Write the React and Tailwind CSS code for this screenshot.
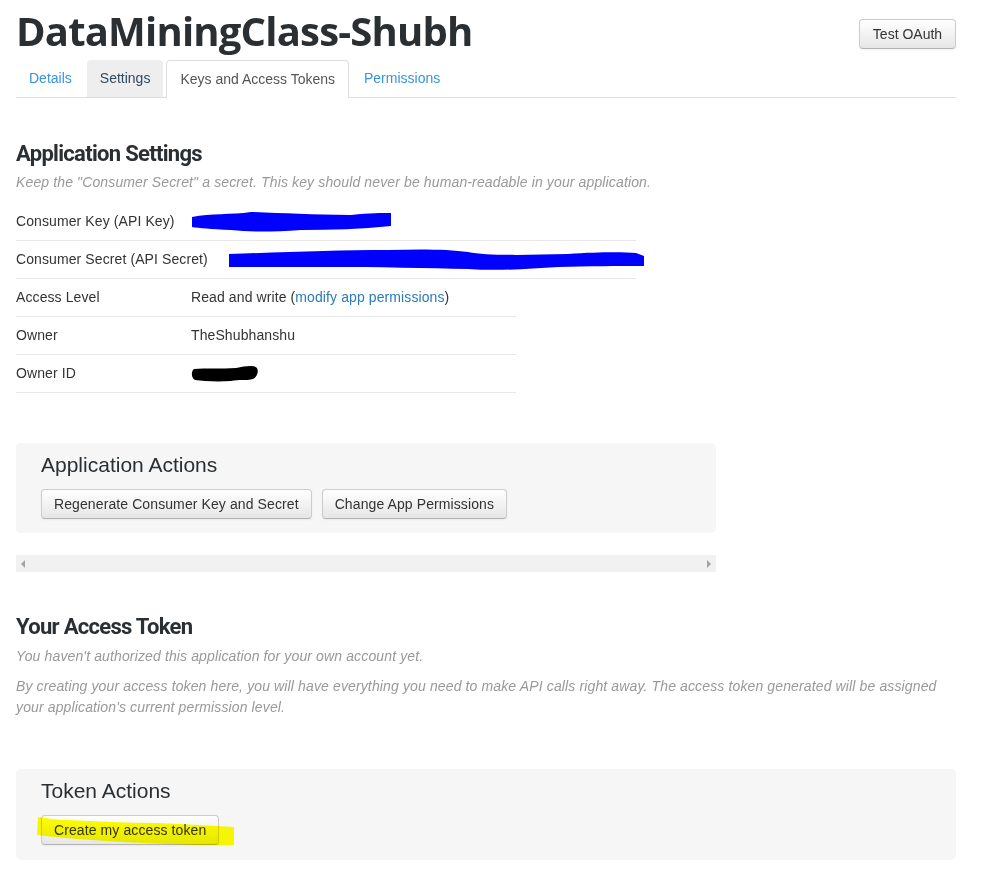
import React from "react";

function Btn({ children, className = "" }) {
  return (
    <button
      className={
        "h-[30px] whitespace-nowrap rounded-[4px] border border-[#ccc] border-b-[#b3b3b3] bg-gradient-to-b from-white to-[#e6e6e6] px-[12px] text-[14px] leading-[20px] text-[#333] shadow-[inset_0_1px_0_rgba(255,255,255,0.2),0_1px_2px_rgba(0,0,0,0.05)] " +
        className
      }
    >
      {children}
    </button>
  );
}

function Row({ label, children, wide, labelClass = "w-[175px]" }) {
  return (
    <div
      className={
        "flex h-[38px] items-center border-b border-[#e8e8e8] " +
        (wide ? "w-[620px]" : "w-[500px]")
      }
    >
      <div className={"shrink-0 " + labelClass}>{label}</div>
      <div className="flex items-center">{children}</div>
    </div>
  );
}

export default function App() {
  return (
    <div className="min-h-[869px] w-[1004px] bg-white px-[16px] font-['Liberation_Sans',Arial,sans-serif] text-[14px] tracking-[0.1px] text-[#333]">
      <div className="w-[940px]">
        {/* Header */}
        <div className="flex items-start justify-between pt-[8px]">
          <h1 className="font-['Open_Sans',sans-serif] text-[40px] font-bold leading-[46px] tracking-[-0.8px] text-[#292f33]">
            DataMiningClass-Shubh
          </h1>
          <Btn className="mt-[11px] h-[29px] w-[97px] px-0 tracking-normal">Test OAuth</Btn>
        </div>

        {/* Tabs */}
        <div className="mt-[6px] flex h-[38px] items-end border-b border-[#ddd] tracking-normal">
          <div className="mr-[2px] flex h-[37px] items-center px-[13px] text-[#3b94d9]">Details</div>
          <div className="mr-[3px] flex h-[37px] items-center rounded-t-[4px] bg-[#eee] px-[13px] text-[#2f4a62]">
            Settings
          </div>
          <div className="-mb-px mr-[2px] flex h-[38px] items-center rounded-t-[4px] border border-b-0 border-[#ddd] bg-white px-[13px] text-[#555]">
            Keys and Access Tokens
          </div>
          <div className="flex h-[37px] items-center px-[13px] text-[#3b94d9]">Permissions</div>
        </div>

        {/* Application Settings */}
        <h2 className="mt-[42px] font-['Roboto',sans-serif] text-[22px] font-bold leading-[28px] tracking-[-0.7px] text-[#292f33]">
          Application Settings
        </h2>
        <p className="mt-[4px] text-[14px] italic leading-[20px] tracking-[0.13px] text-[#999]">
          Keep the "Consumer Secret" a secret. This key should never be human-readable in your application.
        </p>

        <div className="mt-[11px]">
          <Row label="Consumer Key (API Key)" wide>
            <svg width="202" height="24" viewBox="0 0 202 24">
              <path
                d="M1 7 C20 3 40 5 60 2 C90 3 120 5 160 5 C180 3 190 3 200 3 L200 16 C170 19 140 20 110 20 C80 22 60 22 40 20 C20 19 8 18 1 17 Z"
                fill="#0000ff"
              />
            </svg>
          </Row>
          <Row label="Consumer Secret (API Secret)" wide labelClass="w-[212px]">
            <svg width="418" height="24" viewBox="0 0 418 24">
              <path
                d="M1 6 C60 4 110 2 160 2 C190 1 220 1 240 4 C260 8 300 7 340 6 C370 4 395 4 408 5 L416 8 L416 18 C390 18 360 18 330 19 C300 21 270 23 240 21 C200 20 150 19 100 19 C60 19 30 19 1 19 Z"
                fill="#0000ff"
              />
            </svg>
          </Row>
          <Row label="Access Level">
            <span>
              Read and write (<span className="text-[#2b7bb9]">modify app permissions</span>)
            </span>
          </Row>
          <Row label="Owner">TheShubhanshu</Row>
          <Row label="Owner ID">
            <svg width="68" height="18" viewBox="0 0 68 18">
              <path
                d="M3 4 C15 3 30 4 45 3 C55 1 63 0 66 3 C68 7 66 12 62 14 C55 16 48 14 40 16 C25 17 12 16 4 15 C0 13 0 6 3 4 Z"
                fill="#000"
              />
            </svg>
          </Row>
        </div>

        {/* Application Actions */}
        <div className="mt-[50px] h-[90px] w-[700px] rounded-[5px] bg-[#f6f6f6] px-[25px] pt-[10px]">
          <h3 className="text-[21px] leading-[24px] tracking-normal text-[#292f33]">Application Actions</h3>
          <div className="mt-[12px] flex gap-[10px]">
            <Btn>Regenerate Consumer Key and Secret</Btn>
            <Btn>Change App Permissions</Btn>
          </div>
        </div>

        {/* Scrollbar */}
        <div className="mt-[22px] flex h-[17px] w-[700px] items-center justify-between bg-[#f1f1f1] px-[5px]">
          <span className="h-0 w-0 border-y-[4px] border-r-[4px] border-y-transparent border-r-[#a3a3a3]" />
          <span className="h-0 w-0 border-y-[4px] border-l-[4px] border-y-transparent border-l-[#a3a3a3]" />
        </div>

        {/* Your Access Token */}
        <h2 className="mt-[41px] font-['Roboto',sans-serif] text-[22px] font-bold leading-[28px] tracking-[-0.7px] text-[#292f33]">
          Your Access Token
        </h2>
        <p className="mt-[5px] italic leading-[20px] tracking-[0.13px] text-[#999]">
          You haven't authorized this application for your own account yet.
        </p>
        <p className="mt-[10px] italic leading-[21px] tracking-[0.13px] text-[#999]">
          By creating your access token here, you will have everything you need to make API calls right away. The access token generated will be assigned your application's current permission level.
        </p>

        {/* Token Actions */}
        <div className="mt-[51px] h-[91px] w-[940px] rounded-[5px] bg-[#f6f6f6] px-[25px] pt-[10px]">
          <h3 className="text-[21px] leading-[24px] tracking-normal text-[#292f33]">Token Actions</h3>
          <div className="relative mt-[12px] inline-block">
            <Btn>Create my access token</Btn>
            <svg
              className="pointer-events-none absolute left-[-4px] top-0 mix-blend-multiply"
              width="198"
              height="32"
              viewBox="0 0 198 32"
            >
              <path
                d="M1 2 C10 3 20 5 30 5 C60 6 90 8 120 8 C150 9 175 11 197 12 L197 30 C175 30 150 30 130 29 C100 28 70 26 40 24 C25 23 10 21 0 20 Z"
                fill="#ffff00"
              />
            </svg>
          </div>
        </div>
      </div>
    </div>
  );
}
